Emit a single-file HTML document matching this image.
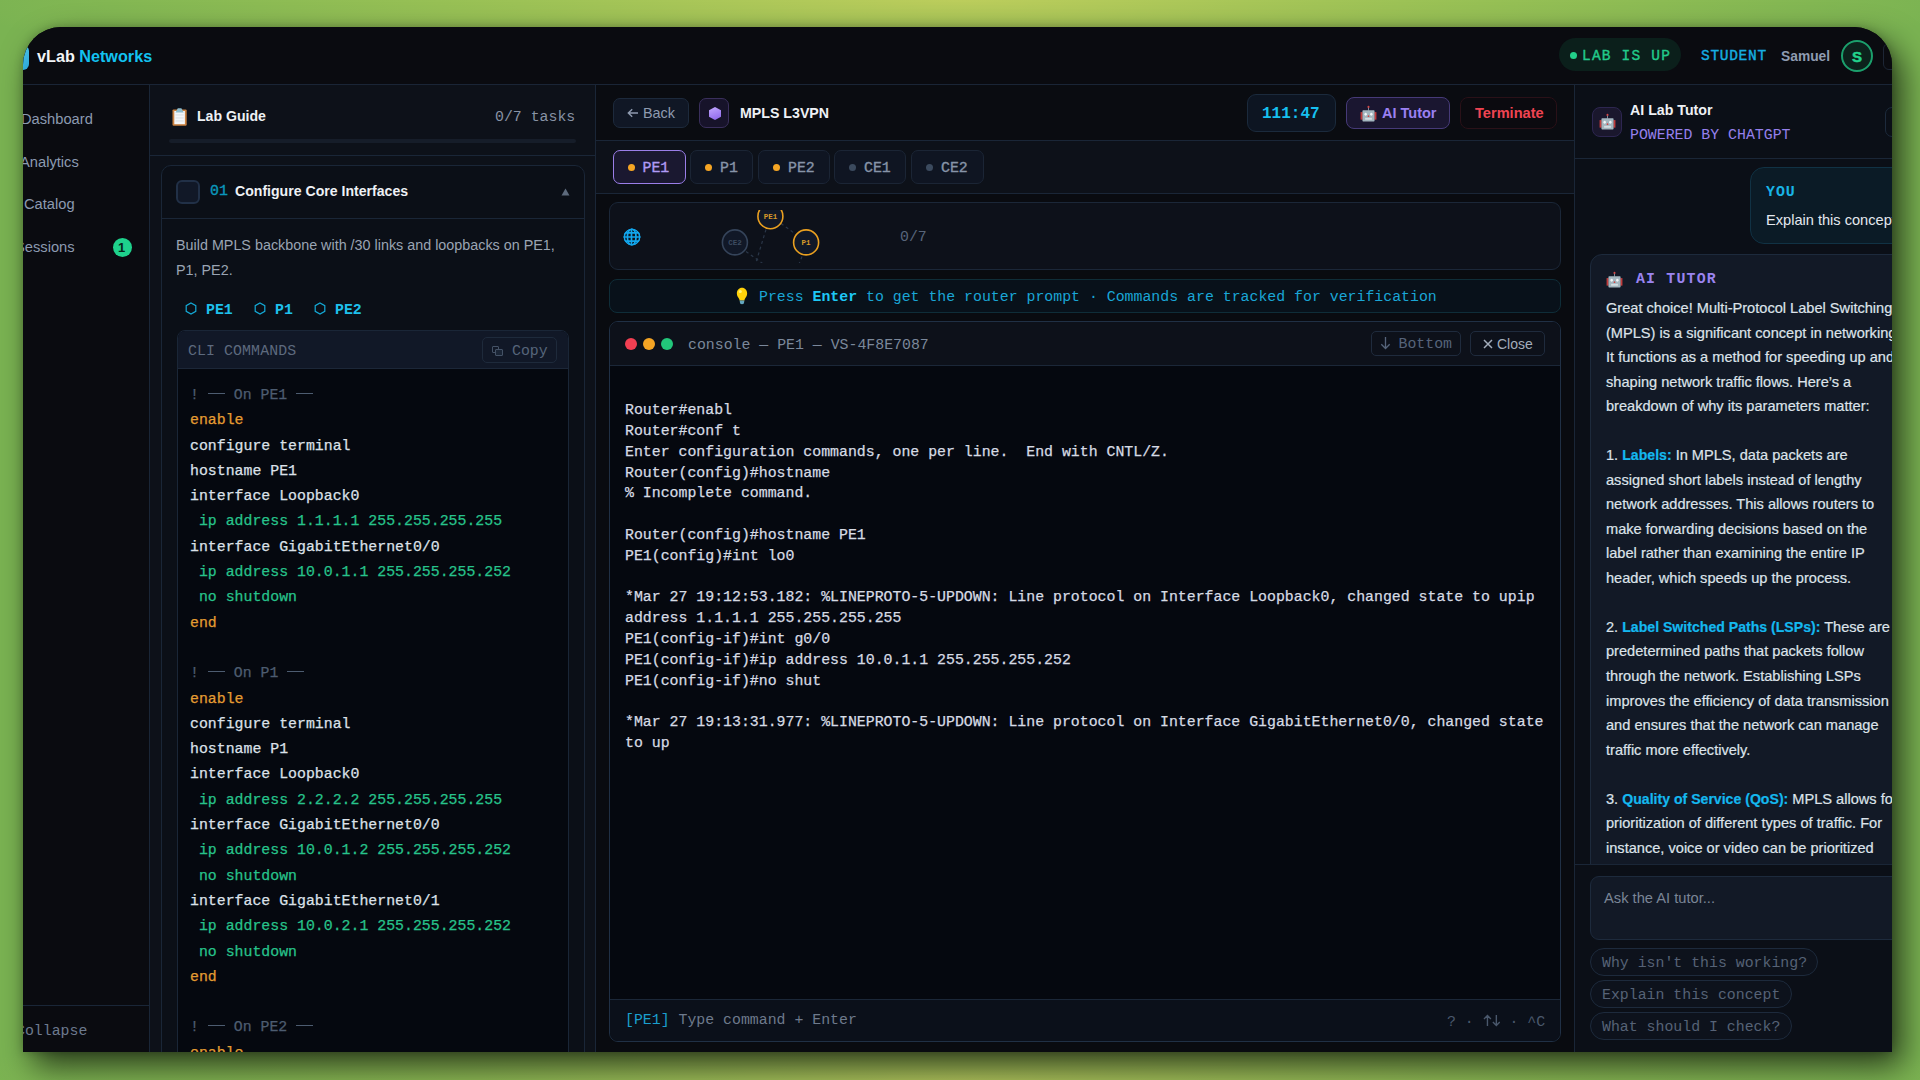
<!DOCTYPE html>
<html><head><meta charset="utf-8">
<style>
*{box-sizing:border-box;margin:0;padding:0}
html,body{width:1920px;height:1080px;overflow:hidden}
body{position:relative;font-family:"Liberation Sans",sans-serif;
background:radial-gradient(ellipse 1000px 90px at 960px 0px,rgba(188,205,92,1) 0%,rgba(160,196,86,.8) 50%,rgba(122,179,82,0) 100%),radial-gradient(ellipse 1000px 80px at 960px 1080px,rgba(176,196,92,1) 0%,rgba(150,190,86,.7) 50%,rgba(122,179,82,0) 100%),#7ab352;}
.mono{font-family:"Liberation Mono",monospace}
.bgb{position:absolute;left:0;top:540px;width:1920px;height:540px;
background:radial-gradient(ellipse 1000px 500px at 960px 560px,#a9c25a 0%,#8fbb55 50%,#76b051 100%);}
.win{position:absolute;left:23px;top:27px;width:1869px;height:1025px;border-radius:38px 38px 0 0;overflow:hidden;background:#0a0b10;
box-shadow:10px 14px 32px rgba(0,0,0,.68),0 0 10px rgba(0,0,0,.2)}
.in{position:absolute;left:-23px;top:-27px;width:1920px;height:1080px}
.a{position:absolute}
.t{position:absolute;white-space:pre;line-height:1}
.bd{border:1px solid #1a2637}
.tag{font-family:"Liberation Mono",monospace;font-size:14.87px;font-weight:700;color:#1ec0ec;line-height:16px}
.hx{display:inline-block;width:12px;height:13px;margin-right:9px;vertical-align:-1px}
.code{font-family:"Liberation Mono",monospace;font-size:14.87px;line-height:25.3px;-webkit-text-stroke:0.25px currentColor}.code div{white-space:pre;height:25.3px}
.code .c{color:#4d5c70}.code .o{color:#e49c32}.code .w{color:#dce1e9}.code .g{color:#27c38b}
.tab{position:absolute;top:150px;height:34px;border-radius:7px;border:1px solid #1b2535;background:#0f1522;font-family:"Liberation Mono",monospace;font-size:14.87px;-webkit-text-stroke:0.35px currentColor;color:#8794a8;line-height:35px;padding-left:14px;white-space:pre}
.tab i{display:inline-block;width:7px;height:7px;border-radius:50%;margin-right:8px;vertical-align:1px}
.tab.act{border:1.5px solid #9a7ee8;background:#1a1830;color:#b09af5;line-height:34px;padding-left:13.5px}
.dot{width:12px;height:12px;border-radius:50%}
.cons{font-family:"Liberation Mono",monospace;font-size:14.87px;line-height:20.8px;white-space:pre;color:#d6dbe4;-webkit-text-stroke:0.25px currentColor}
.aitxt{font-size:14.6px;line-height:24.54px;color:#dde3ea;-webkit-text-stroke:0.2px currentColor}.aitxt div{white-space:pre;height:24.54px}
.hl{color:#14b8ef;font-weight:700;font-size:14.1px}
.chip{position:absolute;left:1590px;height:28px;border-radius:14px;border:1px solid #1d2a3c;background:#0d121c;font-family:"Liberation Mono",monospace;font-size:14.87px;color:#566276;line-height:28px;padding-left:11px;white-space:pre}
.dsh{display:inline-block;width:17px;height:1.3px;background:currentColor;vertical-align:5px}

</style></head><body>
<div class="win"><div class="in">

<!-- HEADER -->
<div class="a" style="left:0;top:27px;width:1920px;height:58px;background:#0a0b10;border-bottom:1px solid #1a2536"></div>
<div class="a" style="left:8px;top:45px;width:21px;height:25px;border-radius:6px;background:linear-gradient(135deg,#5fd0f0,#2aa7d6)"></div>
<div class="t" style="left:37px;top:48px;font-size:16.2px;font-weight:700;color:#f2f5f8">vLab <span style="color:#12c2f0">Networks</span></div>

<div class="a" style="left:1559px;top:38px;width:122px;height:33px;border-radius:17px;background:#0b1f1b"></div>
<div class="a" style="left:1570px;top:52px;width:7px;height:7px;border-radius:50%;background:#22d08a"></div>
<div class="t mono" style="left:1582px;top:49px;font-size:14.5px;letter-spacing:1.2px;-webkit-text-stroke:0.4px #22c98a;color:#22c98a">LAB IS UP</div>
<div class="t mono" style="left:1701px;top:49px;font-size:14.5px;letter-spacing:0.7px;-webkit-text-stroke:0.4px #16aee0;color:#16aee0">STUDENT</div>
<div class="t" style="left:1781px;top:50px;font-size:13.8px;font-weight:700;color:#8f9cb1">Samuel</div>
<div class="a" style="left:1841px;top:40px;width:32px;height:32px;border-radius:50%;border:2px solid #1b9f6c;background:#0c221c"></div>
<div class="t" style="left:1852px;top:48.5px;font-size:15px;font-weight:700;color:#22d38c;-webkit-text-stroke:0.5px #22d38c">S</div>
<div class="a" style="left:1883px;top:43px;width:30px;height:27px;border-radius:6px;border:1px solid #1d2635"></div>

<!-- SIDEBAR -->
<div class="a" style="left:0;top:85px;width:150px;height:1000px;background:#0a0b10;border-right:1px solid #1a2637"></div>
<div class="t" style="left:21px;top:112px;font-size:14.7px;color:#8c9ab0">Dashboard</div>
<div class="t" style="left:20px;top:155px;font-size:14.7px;color:#8c9ab0">Analytics</div>
<div class="t" style="left:24px;top:197px;font-size:14.7px;color:#8c9ab0">Catalog</div>
<div class="t" style="left:15px;top:240px;font-size:14.7px;color:#8c9ab0">Sessions</div>
<div class="a" style="left:113px;top:238px;width:19px;height:19px;border-radius:50%;background:#1ed28c"></div>
<div class="t" style="left:118px;top:241px;font-size:13px;font-weight:700;color:#06251a">1</div>
<div class="a" style="left:0;top:1005px;width:149px;height:1px;background:#1a2637"></div>
<div class="t mono" style="left:16px;top:1024px;font-size:14.87px;color:#6d7a8e">Collapse</div>

<!-- LAB GUIDE -->

<div class="a" style="left:150px;top:85px;width:446px;height:1000px;background:#0d1119;border-right:1px solid #1a2637"></div>
<div class="a" style="left:150px;top:155px;width:445px;height:1px;background:#1a2637"></div>
<svg class="a" style="left:170px;top:105px" width="20" height="23" viewBox="170 105 20 23">
 <rect x="172.5" y="109.4" width="14.2" height="16.4" rx="1.2" fill="#c9803f"/>
 <rect x="174.3" y="111" width="10.6" height="13.2" fill="#f4f6f8"/>
 <rect x="175.5" y="114.5" width="8.2" height="0.9" fill="#d6dbe0"/><rect x="175.5" y="117.5" width="8.2" height="0.9" fill="#d6dbe0"/><rect x="175.5" y="120.5" width="8.2" height="0.9" fill="#d6dbe0"/>
 <path d="M175.5 112.6L177.8 108.2H181.4L183.7 112.6Z" fill="#8dbccd"/>
</svg>
<div class="t" style="left:197px;top:109px;font-size:14.1px;font-weight:700;color:#eef1f5">Lab Guide</div>
<div class="t mono" style="left:495px;top:110px;font-size:14.87px;color:#8893a5">0/7 tasks</div>
<div class="a" style="left:169px;top:139px;width:407px;height:4px;border-radius:2px;background:#161d29"></div>

<div class="a" style="left:161px;top:165px;width:424px;height:950px;border-radius:10px;border:1px solid #1a2637;background:#0b0f17"></div>
<div class="a" style="left:162px;top:218px;width:422px;height:1px;background:#1a2637"></div>
<div class="a" style="left:176px;top:180px;width:24px;height:24px;border-radius:6px;border:2px solid #213047;background:#111827"></div>
<div class="t mono" style="left:210px;top:184px;font-size:14.87px;color:#0a96bb;-webkit-text-stroke:0.4px #0a96bb">01</div>
<div class="t" style="left:235px;top:184px;font-size:14.1px;font-weight:700;color:#eef1f5">Configure Core Interfaces</div>
<svg class="a" style="left:561px;top:188px" width="9" height="8" viewBox="0 0 9 8"><path d="M4.5 0.5L8.5 7.5H0.5Z" fill="#5d6a7c"/></svg>
<div class="t" style="left:176px;top:233px;font-size:14.35px;color:#9aa4b3;line-height:25px;white-space:normal;width:400px">Build MPLS backbone with /30 links and loopbacks on PE1,<br>P1, PE2.</div>

<div class="t tag" style="left:185px;top:301.5px"><svg class="hx" viewBox="0 0 12 13"><path d="M6 1L10.8 3.7V9.3L6 12L1.2 9.3V3.7Z" fill="none" stroke="#14a9d6" stroke-width="1.2"/></svg>PE1</div>
<div class="t tag" style="left:254px;top:301.5px"><svg class="hx" viewBox="0 0 12 13"><path d="M6 1L10.8 3.7V9.3L6 12L1.2 9.3V3.7Z" fill="none" stroke="#14a9d6" stroke-width="1.2"/></svg>P1</div>
<div class="t tag" style="left:314px;top:301.5px"><svg class="hx" viewBox="0 0 12 13"><path d="M6 1L10.8 3.7V9.3L6 12L1.2 9.3V3.7Z" fill="none" stroke="#14a9d6" stroke-width="1.2"/></svg>PE2</div>

<div class="a" style="left:177px;top:330px;width:392px;height:800px;border-radius:8px;border:1px solid #1a2637;background:#05080f"></div>
<div class="a" style="left:178px;top:331px;width:390px;height:38px;border-radius:7px 7px 0 0;background:#111827;border-bottom:1px solid #1c2738"></div>
<div class="t mono" style="left:188px;top:344px;font-size:14.87px;letter-spacing:0.1px;color:#5d6a7e">CLI COMMANDS</div>
<div class="a" style="left:482px;top:337px;width:75px;height:26px;border-radius:5px;border:1px solid #1e2a3b"></div>
<div class="a" style="left:492px;top:346px;width:7px;height:7px;border:1.2px solid #445266;border-radius:1px"></div>
<div class="a" style="left:494.5px;top:348.5px;width:8px;height:7px;border:1.2px solid #445266;border-radius:1px;background:#1a2536"></div>
<div class="t mono" style="left:512px;top:344px;font-size:14.87px;color:#56657a">Copy</div>
<div class="a code" style="left:190px;top:383px">
<div class="c">! <i class="dsh"></i> On PE1 <i class="dsh"></i></div>
<div class="o">enable</div>
<div class="w">configure terminal</div>
<div class="w">hostname PE1</div>
<div class="w">interface Loopback0</div>
<div class="g"> ip address 1.1.1.1 255.255.255.255</div>
<div class="w">interface GigabitEthernet0/0</div>
<div class="g"> ip address 10.0.1.1 255.255.255.252</div>
<div class="g"> no shutdown</div>
<div class="o">end</div>
<div class="w">&nbsp;</div>
<div class="c">! <i class="dsh"></i> On P1 <i class="dsh"></i></div>
<div class="o">enable</div>
<div class="w">configure terminal</div>
<div class="w">hostname P1</div>
<div class="w">interface Loopback0</div>
<div class="g"> ip address 2.2.2.2 255.255.255.255</div>
<div class="w">interface GigabitEthernet0/0</div>
<div class="g"> ip address 10.0.1.2 255.255.255.252</div>
<div class="g"> no shutdown</div>
<div class="w">interface GigabitEthernet0/1</div>
<div class="g"> ip address 10.0.2.1 255.255.255.252</div>
<div class="g"> no shutdown</div>
<div class="o">end</div>
<div class="w">&nbsp;</div>
<div class="c">! <i class="dsh"></i> On PE2 <i class="dsh"></i></div>
<div class="o">enable</div>
</div>


<!-- CENTER -->

<div class="a" style="left:596px;top:85px;width:978px;height:56px;background:#0a0c11;border-bottom:1px solid #1a2637"></div>
<div class="a" style="left:596px;top:141px;width:978px;height:53px;background:#0d1119;border-bottom:1px solid #1a2637"></div>
<div class="a" style="left:596px;top:194px;width:978px;height:900px;background:#090b10"></div>
<div class="a" style="left:1574px;top:85px;width:1px;height:1000px;background:#1a2637"></div>

<div class="a" style="left:613px;top:98px;width:76px;height:30px;border-radius:7px;border:1px solid #1d2a3c;background:#101725"></div>
<svg class="a" style="left:627px;top:108px" width="12" height="10" viewBox="0 0 12 10"><path d="M11 5H1.5M5.2 1.2L1.3 5l3.9 3.8" stroke="#8f9bb0" stroke-width="1.4" fill="none"/></svg>
<div class="t" style="left:643px;top:106px;font-size:14.4px;color:#8f9bb0">Back</div>
<div class="a" style="left:699px;top:98px;width:30px;height:30px;border-radius:7px;border:1px solid #3a2f5c;background:#17132a"></div>
<div class="a" style="left:709px;top:107px;width:12px;height:13px;background:linear-gradient(160deg,#c3a8ff,#8b63ea);clip-path:polygon(50% 0,100% 25%,100% 75%,50% 100%,0 75%,0 25%)"></div>
<div class="t" style="left:740px;top:106px;font-size:14.2px;font-weight:700;color:#eef1f5">MPLS L3VPN</div>

<div class="a" style="left:1247px;top:94px;width:89px;height:38px;border-radius:9px;border:1px solid #1b2a3c;background:#0d1522"></div>
<div class="t mono" style="left:1262px;top:105.5px;font-size:16px;font-weight:700;color:#16c0f0">111:47</div>
<div class="a" style="left:1346px;top:97px;width:104px;height:32px;border-radius:8px;border:1px solid #463a78;background:#1a1630"></div>
<svg width="17" height="17" viewBox="0 0 18 18" style="position:absolute;left:1360px;top:104.5px">
<rect x="8.6" y="1.5" width="0.9" height="4.5" fill="#8fa3ad"/><circle cx="9" cy="2" r="1.1" fill="#d04848"/>
<rect x="0.6" y="7.5" width="2.2" height="8" fill="#c23b3b"/><rect x="15.2" y="7.5" width="2.2" height="8" fill="#c23b3b"/>
<rect x="2.6" y="5.6" width="12.8" height="12" rx="0.8" fill="#a3b6bf"/>
<ellipse cx="6" cy="9.8" rx="1.3" ry="1.5" fill="#f2f5f7"/><ellipse cx="12" cy="9.8" rx="1.3" ry="1.5" fill="#f2f5f7"/>
<circle cx="9" cy="11.8" r="0.9" fill="#d04848"/>
<rect x="5.4" y="13.6" width="7.2" height="2" fill="#d5dde2"/></svg>
<div class="t" style="left:1382px;top:106px;font-size:14.5px;font-weight:700;color:#9a80f2">AI Tutor</div>
<div class="a" style="left:1460px;top:97px;width:97px;height:32px;border-radius:8px;border:1px solid #2a1118;background:#0b0a0f"></div>
<div class="t" style="left:1475px;top:106px;font-size:14.6px;font-weight:700;color:#ef4452">Terminate</div>

<div class="tab act" style="left:613px;width:73px"><i style="background:#f5a524"></i>PE1</div>
<div class="tab" style="left:690px;width:63px"><i style="background:#f5a524"></i>P1</div>
<div class="tab" style="left:758px;width:72px"><i style="background:#f5a524"></i>PE2</div>
<div class="tab" style="left:834px;width:72px"><i style="background:#3b4a5e"></i>CE1</div>
<div class="tab" style="left:911px;width:73px"><i style="background:#3b4a5e"></i>CE2</div>

<div class="a" style="left:609px;top:202px;width:952px;height:68px;border-radius:9px;border:1px solid #1b2738;background:#0d111a"></div>

<svg class="a" style="left:622px;top:226.5px" width="20" height="20" viewBox="-10 -10 20 20">
 <defs><clipPath id="gc"><circle r="8.6"/></clipPath></defs>
 <g clip-path="url(#gc)" stroke="#12a6ec" stroke-width="1.7" fill="none">
  <circle r="7.8"/>
  <line x1="-10" y1="-4.2" x2="10" y2="-4.2"/><line x1="-10" y1="0" x2="10" y2="0"/><line x1="-10" y1="4.1" x2="10" y2="4.1"/>
  <line x1="-0.5" y1="-10" x2="-0.5" y2="10"/><ellipse cx="-0.3" cy="0" rx="4.3" ry="8.2"/>
 </g>
</svg>
<svg class="a" style="left:700px;top:209.5px" width="140" height="53" viewBox="700 209.5 140 53">
 <g stroke="#2a3648" stroke-width="1.2" stroke-dasharray="3 3" fill="none">
  <line x1="766" y1="229" x2="755" y2="265"/>
  <line x1="746" y1="251" x2="764" y2="264"/>
  <line x1="781" y1="223" x2="796" y2="234"/>
  <line x1="802" y1="256" x2="798" y2="266"/>
 </g>
 <circle cx="770.4" cy="215.7" r="12.5" fill="#111827" stroke="#eaa020" stroke-width="1.6"/>
 <circle cx="734.9" cy="241.9" r="12.5" fill="#111827" stroke="#35445a" stroke-width="1.6"/>
 <circle cx="806.1" cy="241.9" r="12.5" fill="#111827" stroke="#eaa020" stroke-width="1.6"/>
 <text x="770.4" y="218.5" font-family="Liberation Mono" font-size="7.5" font-weight="700" fill="#d89a2a" text-anchor="middle">PE1</text>
 <text x="734.9" y="244.6" font-family="Liberation Mono" font-size="7.5" font-weight="700" fill="#3d4b60" text-anchor="middle">CE2</text>
 <text x="806.1" y="244.6" font-family="Liberation Mono" font-size="7.5" font-weight="700" fill="#d89a2a" text-anchor="middle">P1</text>
</svg>


<div class="t mono" style="left:900px;top:230px;font-size:14.87px;color:#58657a">0/7</div>

<div class="a" style="left:609px;top:279px;width:952px;height:34px;border-radius:8px;border:1px solid #0f2d38;background:#08111a"></div>
<svg class="a" style="left:735.5px;top:287px" width="12" height="18" viewBox="0 0 14 18" preserveAspectRatio="none">
 <path d="M7 0.8C3.5 0.8 1 3.4 1 6.6c0 2.2 1.2 3.6 2.2 4.7.7.8 1 1.5 1 2.3h5.6c0-.8.3-1.5 1-2.3 1-1.1 2.2-2.5 2.2-4.7C13 3.4 10.5.8 7 .8z" fill="#ffd20a"/>
 <ellipse cx="5" cy="4.5" rx="1.8" ry="1.6" fill="#fff27a"/>
 <path d="M4.2 13.6H9.8L9.2 16.6Q7 17.8 4.8 16.6Z" fill="#62a6bf"/>
</svg>
<div class="t mono" style="left:759px;top:290px;font-size:14.87px;color:#1aa6d6">Press <b style="color:#1ec8f5">Enter</b> to get the router prompt · Commands are tracked for verification</div>

<div class="a" style="left:609px;top:321px;width:952px;height:721px;border-radius:9px;border:1px solid #203045;background:#05080f;overflow:hidden">
 <div class="a" style="left:0;top:0;width:952px;height:44px;background:#0d111a;border-bottom:1px solid #1b2738"></div>
 <div class="a" style="left:0;top:677px;width:952px;height:44px;background:#0b101a;border-top:1px solid #1b2738"></div>
</div>
<div class="a dot" style="left:625px;top:338px;background:#f23f52"></div>
<div class="a dot" style="left:643px;top:338px;background:#f5a524"></div>
<div class="a dot" style="left:661px;top:338px;background:#22c77a"></div>
<div class="t mono" style="left:688px;top:337.5px;font-size:14.87px;color:#7b889b">console — PE1 — VS-4F8E7087</div>
<div class="a" style="left:1371px;top:331px;width:90px;height:25px;border-radius:5px;border:1px solid #1f2b3d"></div>
<svg class="a" style="left:1380px;top:336px" width="11" height="14" viewBox="0 0 11 14"><path d="M5.5 1V12.5M1.3 8.3L5.5 12.5L9.7 8.3" stroke="#56647a" stroke-width="1.3" fill="none"/></svg>
<div class="t mono" style="left:1398.5px;top:337px;font-size:14.87px;color:#56647a">Bottom</div>
<div class="a" style="left:1470px;top:331px;width:75px;height:25px;border-radius:5px;border:1px solid #1f2b3d"></div>
<svg class="a" style="left:1483px;top:338.5px" width="10" height="10" viewBox="0 0 10 10"><path d="M1 1L9 9M9 1L1 9" stroke="#a3adbb" stroke-width="1.5"/></svg>
<div class="t" style="left:1497px;top:337px;font-size:14px;color:#a3adbb">Close</div>

<div class="a cons" style="left:625px;top:400.3px">Router#enabl
Router#conf t
Enter configuration commands, one per line.  End with CNTL/Z.
Router(config)#hostname
% Incomplete command.

Router(config)#hostname PE1
PE1(config)#int lo0

*Mar 27 19:12:53.182: %LINEPROTO-5-UPDOWN: Line protocol on Interface Loopback0, changed state to upip
address 1.1.1.1 255.255.255.255
PE1(config-if)#int g0/0
PE1(config-if)#ip address 10.0.1.1 255.255.255.252
PE1(config-if)#no shut

*Mar 27 19:13:31.977: %LINEPROTO-5-UPDOWN: Line protocol on Interface GigabitEthernet0/0, changed state
to up</div>

<div class="t mono" style="left:625px;top:1013px;font-size:14.87px;color:#6e7a8c"><span style="color:#1a9fcf">[PE1]</span> Type command + Enter</div>
<div class="t mono" style="left:1447px;top:1014px;font-size:14.87px;color:#4a586c">? · <svg width="17.8" height="13" viewBox="0 0 18 13" style="vertical-align:-1px"><path d="M4.5 12V1.5M1 5L4.5 1.5L8 5M13.5 1V11.5M10 8L13.5 11.5L17 8" stroke="#4a586c" stroke-width="1.4" fill="none"/></svg> · ^C</div>


<!-- AI PANEL -->

<div class="a" style="left:1575px;top:85px;width:345px;height:1000px;background:#0b0f17"></div>
<div class="a" style="left:1575px;top:158px;width:345px;height:1px;background:#1a2637"></div>
<div class="a" style="left:1592px;top:107px;width:30px;height:30px;border-radius:8px;border:1.5px solid #2d2650;background:#1a172d"></div>
<svg width="17" height="17" viewBox="0 0 18 18" style="position:absolute;left:1598.5px;top:112.5px">
<rect x="8.6" y="1.5" width="0.9" height="4.5" fill="#8fa3ad"/><circle cx="9" cy="2" r="1.1" fill="#d04848"/>
<rect x="0.6" y="7.5" width="2.2" height="8" fill="#c23b3b"/><rect x="15.2" y="7.5" width="2.2" height="8" fill="#c23b3b"/>
<rect x="2.6" y="5.6" width="12.8" height="12" rx="0.8" fill="#a3b6bf"/>
<ellipse cx="6" cy="9.8" rx="1.3" ry="1.5" fill="#f2f5f7"/><ellipse cx="12" cy="9.8" rx="1.3" ry="1.5" fill="#f2f5f7"/>
<circle cx="9" cy="11.8" r="0.9" fill="#d04848"/>
<rect x="5.4" y="13.6" width="7.2" height="2" fill="#d5dde2"/></svg>
<div class="t" style="left:1630px;top:103px;font-size:14.2px;font-weight:700;color:#eef1f5">AI Lab Tutor</div>
<div class="t mono" style="left:1630px;top:128px;font-size:14.87px;color:#9580ec">POWERED BY CHATGPT</div>
<div class="a" style="left:1885px;top:107px;width:30px;height:30px;border-radius:7px;border:1px solid #1d2a3c"></div>

<div class="a" style="left:1750px;top:167px;width:240px;height:77px;border-radius:14px;border:1px solid #113244;background:#0b1b26"></div>
<div class="t mono" style="left:1766px;top:185px;font-size:14.87px;font-weight:700;letter-spacing:1px;color:#18b4e6">YOU</div>
<div class="t" style="left:1766px;top:213px;font-size:14.6px;color:#e3e8ee">Explain this concept</div>

<div class="a" style="left:1590px;top:254px;width:400px;height:640px;border-radius:12px;border:1px solid #1d2a3c;background:#121926"></div>
<svg width="17" height="17" viewBox="0 0 18 18" style="position:absolute;left:1606px;top:271px">
<rect x="8.6" y="1.5" width="0.9" height="4.5" fill="#8fa3ad"/><circle cx="9" cy="2" r="1.1" fill="#d04848"/>
<rect x="0.6" y="7.5" width="2.2" height="8" fill="#c23b3b"/><rect x="15.2" y="7.5" width="2.2" height="8" fill="#c23b3b"/>
<rect x="2.6" y="5.6" width="12.8" height="12" rx="0.8" fill="#a3b6bf"/>
<ellipse cx="6" cy="9.8" rx="1.3" ry="1.5" fill="#f2f5f7"/><ellipse cx="12" cy="9.8" rx="1.3" ry="1.5" fill="#f2f5f7"/>
<circle cx="9" cy="11.8" r="0.9" fill="#d04848"/>
<rect x="5.4" y="13.6" width="7.2" height="2" fill="#d5dde2"/></svg>
<div class="t mono" style="left:1636px;top:272px;font-size:14.87px;font-weight:700;letter-spacing:1.2px;color:#9a84f0">AI TUTOR</div>
<div class="a aitxt" style="left:1606px;top:296px"><div>Great choice! Multi-Protocol Label Switching</div>
<div>(MPLS) is a significant concept in networking.</div>
<div>It functions as a method for speeding up and</div>
<div>shaping network traffic flows. Here’s a</div>
<div>breakdown of why its parameters matter:</div>
<div>&nbsp;</div>
<div>1. <b class="hl">Labels:</b> In MPLS, data packets are</div>
<div>assigned short labels instead of lengthy</div>
<div>network addresses. This allows routers to</div>
<div>make forwarding decisions based on the</div>
<div>label rather than examining the entire IP</div>
<div>header, which speeds up the process.</div>
<div>&nbsp;</div>
<div>2. <b class="hl">Label Switched Paths (LSPs):</b> These are</div>
<div>predetermined paths that packets follow</div>
<div>through the network. Establishing LSPs</div>
<div>improves the efficiency of data transmission</div>
<div>and ensures that the network can manage</div>
<div>traffic more effectively.</div>
<div>&nbsp;</div>
<div>3. <b class="hl">Quality of Service (QoS):</b> MPLS allows for</div>
<div>prioritization of different types of traffic. For</div>
<div>instance, voice or video can be prioritized</div></div>

<div class="a" style="left:1575px;top:864px;width:345px;height:220px;background:#0b0f17;border-top:1px solid #1a2637"></div>
<div class="a" style="left:1590px;top:876px;width:400px;height:64px;border-radius:9px;border:1px solid #1d2a3c;background:#121926"></div>
<div class="t" style="left:1604px;top:891px;font-size:14.7px;color:#7a8596">Ask the AI tutor...</div>
<div class="chip" style="top:948px;width:228px">Why isn't this working?</div>
<div class="chip" style="top:980px;width:202px">Explain this concept</div>
<div class="chip" style="top:1012px;width:202px">What should I check?</div>


</div></div>
</body></html>
